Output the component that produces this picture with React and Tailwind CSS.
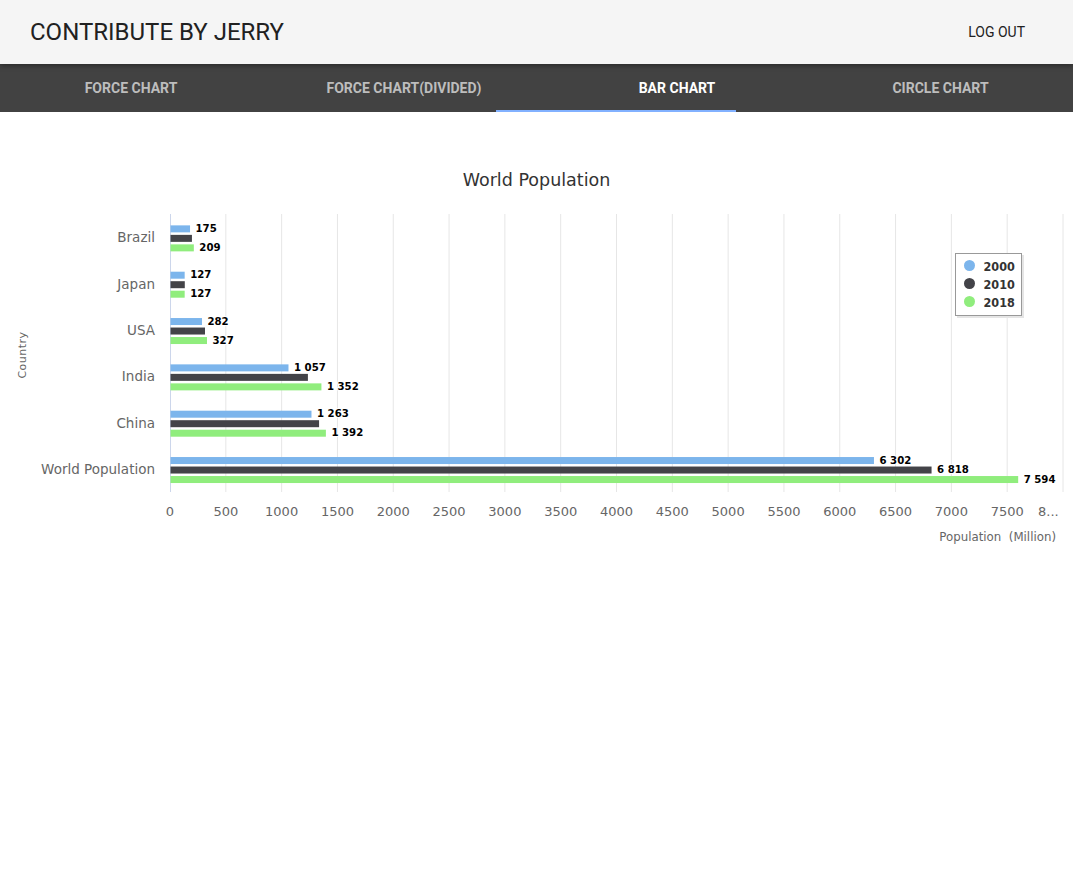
import React from "react";

const BLUE = "#7cb5ec";
const DARK = "#434348";
const GREEN = "#90ed7d";

const X0 = 170;
const XMAX = 1063;
const SCALE = (XMAX - X0) / 8000;
const TOP = 214;
const BOTTOM = 492;
const BAND = (BOTTOM - TOP) / 6;

const COND = "font-['DejaVu_Sans_Condensed','DejaVu_Sans',sans-serif] [font-stretch:condensed]";

const data = [
  { name: "Brazil", v: [175, 192, 209], show: [true, false, true] },
  { name: "Japan", v: [127, 128, 127], show: [true, false, true] },
  { name: "USA", v: [282, 309, 327], show: [true, false, true] },
  { name: "India", v: [1057, 1231, 1352], show: [true, false, true] },
  { name: "China", v: [1263, 1331, 1392], show: [true, false, true] },
  { name: "World Population", v: [6302, 6818, 7594], show: [true, true, true] },
];

const fmt = (n) => {
  const s = String(n);
  return s.length > 3 ? s.slice(0, s.length - 3) + " " + s.slice(-3) : s;
};

const colors = [BLUE, DARK, GREEN];
const offsets = [-13, -3.5, 6];

function Chart() {
  const ticks = [];
  for (let i = 0; i <= 16; i++) ticks.push(i * 500);
  return (
    <svg
      width="1073"
      height="460"
      viewBox="0 112 1073 460"
      className="block font-['DejaVu_Sans',sans-serif]"
    >
      <text x="536.5" y="180" textAnchor="middle" dominantBaseline="central" fontSize="17.5" fill="#333">
        World Population
      </text>
      {ticks.slice(1).map((t) => (
        <line
          key={t}
          x1={X0 + t * SCALE}
          x2={X0 + t * SCALE}
          y1={TOP}
          y2={BOTTOM}
          stroke="#e6e6e6"
          strokeWidth="1"
        />
      ))}
      <line x1={X0 + 0.5} x2={X0 + 0.5} y1={TOP} y2={BOTTOM} stroke="#ccd6eb" strokeWidth="1" />
      {ticks.slice(0, 16).map((t) => (
        <text
          key={t}
          x={X0 + t * SCALE}
          y="511"
          textAnchor="middle"
          dominantBaseline="central"
          fontSize="13"
          fill="#666"
        >
          {t}
        </text>
      ))}
      <text x="1038" y="511" dominantBaseline="central" fontSize="13" fill="#666">
        8...
      </text>
      <text x="1056" y="537" textAnchor="end" dominantBaseline="central" fontSize="11.8" fill="#666">
        {"Population\u00a0\u00a0(Million)"}
      </text>
      <text
        x="22"
        y="355"
        transform="rotate(-90 22 355)"
        textAnchor="middle"
        dominantBaseline="central"
        fontSize="11"
        letterSpacing="0.5"
        fill="#666"
      >
        Country
      </text>
      {data.map((d, i) => {
        const c = TOP + BAND * (i + 0.5);
        const cb = c + 1.2;
        return (
          <g key={d.name}>
            <text x="155" y={c} textAnchor="end" dominantBaseline="central" fontSize="13.5" fill="#666">
              {d.name}
            </text>
            {d.v.map((v, j) => {
              const y = cb + offsets[j];
              const w = v * SCALE;
              return (
                <g key={j}>
                  <rect x={X0 + 0.5} y={y} width={w} height="7" fill={colors[j]} />
                  {d.show[j] && (
                    <text
                      x={X0 + w + 6}
                      y={y + 3}
                      dominantBaseline="central"
                      fontSize="11.3"
                      fontWeight="bold"
                      fill="#000"
                      stroke="#fff"
                      strokeWidth="2"
                      paintOrder="stroke"
                      strokeLinejoin="round"
                      className={COND}
                    >
                      {fmt(v)}
                    </text>
                  )}
                </g>
              );
            })}
          </g>
        );
      })}
      <rect x="957" y="255" width="67" height="63" fill="#e5e5e5" />
      <rect x="955.5" y="253.5" width="66" height="62" fill="#fff" stroke="#999" strokeWidth="1" />
      {["2000", "2010", "2018"].map((l, i) => (
        <g key={l}>
          <circle cx="969.5" cy={265.5 + i * 18} r="5.5" fill={colors[i]} />
          <text
            x="983.5"
            y={266 + i * 18}
            dominantBaseline="central"
            fontSize="12.5"
            fontWeight="bold"
            fill="#333"
            className={COND}
          >
            {l}
          </text>
        </g>
      ))}
    </svg>
  );
}

export default function App() {
  const tabs = ["FORCE CHART", "FORCE CHART(DIVIDED)", "BAR CHART", "CIRCLE CHART"];
  return (
    <div className="w-[1073px] min-h-[888px] bg-white font-['Roboto','Liberation_Sans',sans-serif]">
      <header className="relative z-10 h-16 bg-[#f5f5f5] flex items-center justify-between pl-[30px] pr-[48px] shadow-[0_2px_5px_rgba(0,0,0,0.35)]">
        <h1 className="text-[24px] leading-none text-[#212121]">CONTRIBUTE BY JERRY</h1>
        <button className="text-[14px] font-normal text-[#212121]">LOG OUT</button>
      </header>
      <nav className="relative h-12 bg-[#424242] grid grid-cols-[262px_284px_262px_1fr]">
        {tabs.map((t, i) => (
          <div
            key={t}
            className={
              i === 2
                ? "flex items-center justify-center text-[14px] font-bold text-white"
                : "flex items-center justify-center text-[14px] font-bold text-[#bdbdbd]"
            }
          >
            {t}
          </div>
        ))}
        <div className="absolute left-[496px] bottom-0 w-[240px] h-[2px] bg-[#82b1ff]" />
      </nav>
      <Chart />
    </div>
  );
}
